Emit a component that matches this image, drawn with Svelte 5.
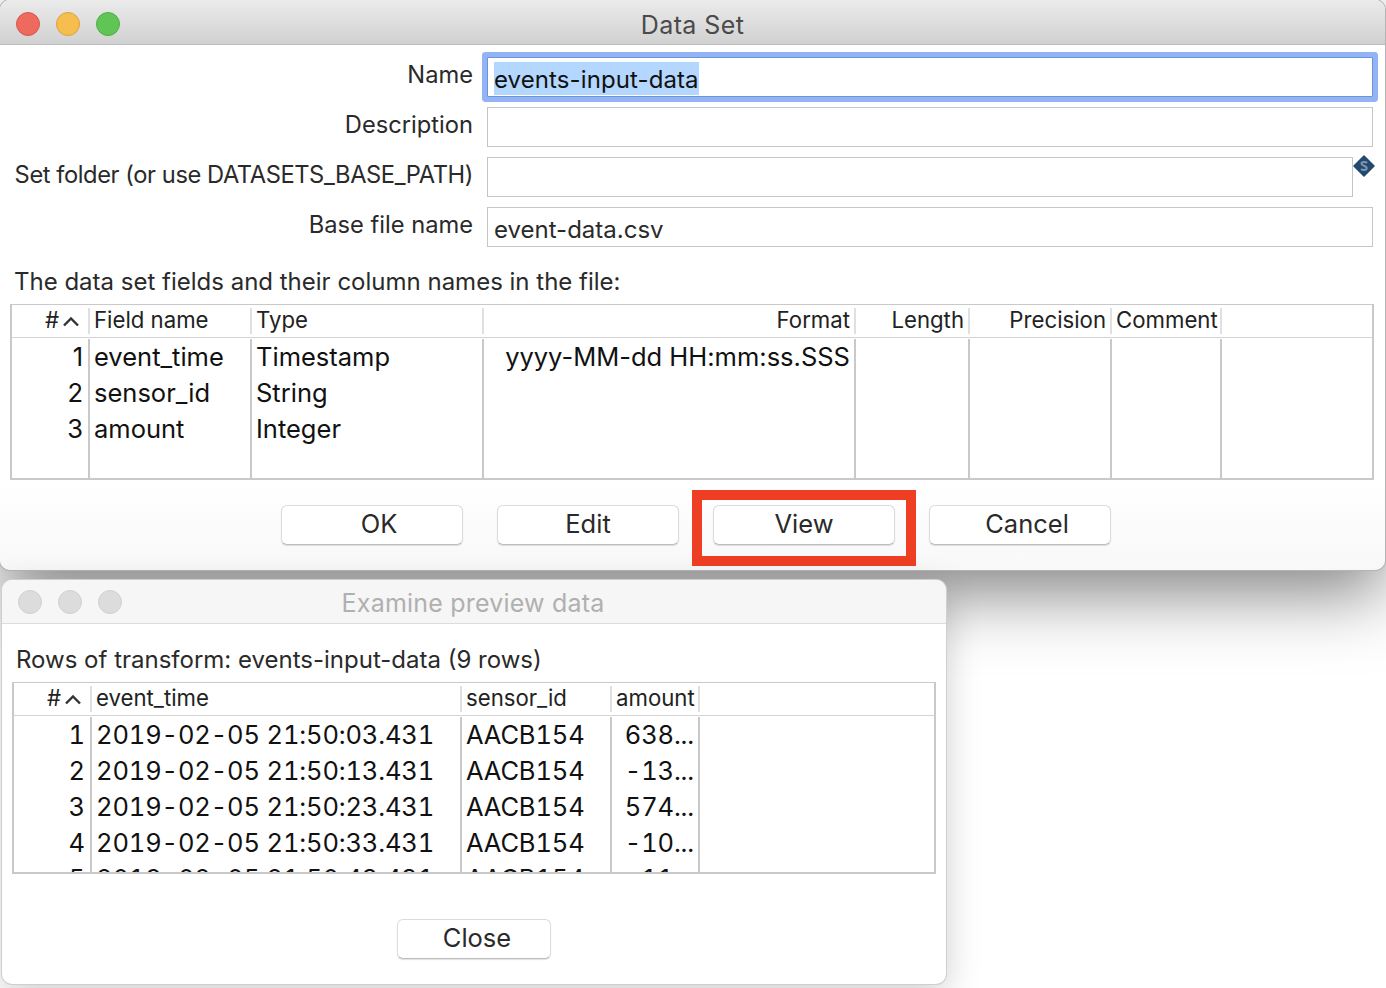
<script>
  const fields = [
    { n: 1, name: 'event_time', type: 'Timestamp', format: 'yyyy-MM-dd HH:mm:ss.SSS' },
    { n: 2, name: 'sensor_id', type: 'String', format: '' },
    { n: 3, name: 'amount', type: 'Integer', format: '' },
    { n: '', name: '', type: '', format: '' }
  ];

  const rows = [
    { n: 1, time: '2019-02-05 21:50:03.431', id: 'AACB154', amount: '638...' },
    { n: 2, time: '2019-02-05 21:50:13.431', id: 'AACB154', amount: '-13...' },
    { n: 3, time: '2019-02-05 21:50:23.431', id: 'AACB154', amount: '574...' },
    { n: 4, time: '2019-02-05 21:50:33.431', id: 'AACB154', amount: '-10...' },
    { n: 5, time: '2019-02-05 21:50:43.431', id: 'AACB154', amount: '-11...' }
  ];
</script>

<div class="desktop">
  <section class="window main">
    <header class="titlebar">
      <div class="lights">
        <span class="light red"></span>
        <span class="light yellow"></span>
        <span class="light green"></span>
      </div>
      <h1>Data Set</h1>
    </header>

    <div class="form">
      <label for="ds-name">Name</label>
      <div class="field focused">
        <div id="ds-name" class="input"><span class="selected">events-input-data</span></div>
      </div>

      <label for="ds-desc">Description</label>
      <div class="field"><div id="ds-desc" class="input"></div></div>

      <label class="long" for="ds-folder">Set folder (or use DATASETS_BASE_PATH)</label>
      <div class="field with-var">
        <div id="ds-folder" class="input"></div>
        <svg class="var-icon" width="22" height="22" viewBox="0 0 22 22">
          <path d="M11 1 21 11 11 21 1 11Z" fill="#24496f" stroke="#24496f" stroke-width="1.500" stroke-linejoin="round" />
          <path d="M14 8C13 6.800 8.500 6.500 8.500 8.800c0 2.200 5.200 1.800 5.200 4.400 0 2.300-4.400 2-5.600.8" fill="none" stroke="#7b95ae" stroke-width="2" />
        </svg>
      </div>

      <label for="ds-base">Base file name</label>
      <div class="field"><div id="ds-base" class="input">event-data.csv</div></div>
    </div>

    <p class="caption">The data set fields and their column names in the file:</p>

    <div class="table fields-table">
      <div class="thead row">
        <div class="cell num">#<svg class="sort" width="16" height="10" viewBox="0 0 16 10"><path d="M1 8.500 8 1.500 15 8.500" fill="none" stroke="#333" stroke-width="2.400" /></svg></div>
        <div class="cell">Field name</div>
        <div class="cell">Type</div>
        <div class="cell right">Format</div>
        <div class="cell right">Length</div>
        <div class="cell right">Precision</div>
        <div class="cell">Comment</div>
        <div class="cell last"></div>
      </div>
      <div class="tbody">
        {#each fields as f}
          <div class="row">
            <div class="cell num">{f.n}</div>
            <div class="cell">{f.name}</div>
            <div class="cell">{f.type}</div>
            <div class="cell right">{f.format}</div>
            <div class="cell"></div>
            <div class="cell"></div>
            <div class="cell"></div>
            <div class="cell last"></div>
          </div>
        {/each}
      </div>
    </div>

    <div class="actions">
      <button class="off">OK</button>
      <button>Edit</button>
      <span class="highlight"><button>View</button></span>
      <button class="off">Cancel</button>
    </div>
  </section>

  <section class="window preview">
    <header class="titlebar inactive">
      <div class="lights">
        <span class="light"></span>
        <span class="light"></span>
        <span class="light"></span>
      </div>
      <h1>Examine preview data</h1>
    </header>

    <p class="rows-title">Rows of transform: events-input-data (9 rows)</p>

    <div class="table rows-table">
      <div class="thead row">
        <div class="cell num">#<svg class="sort" width="16" height="10" viewBox="0 0 16 10"><path d="M1 8.500 8 1.500 15 8.500" fill="none" stroke="#333" stroke-width="2.400" /></svg></div>
        <div class="cell">event_time</div>
        <div class="cell">sensor_id</div>
        <div class="cell">amount</div>
        <div class="cell last"></div>
      </div>
      <div class="tbody">
        {#each rows as r}
          <div class="row">
            <div class="cell num">{r.n}</div>
            <div class="cell">{r.time}</div>
            <div class="cell">{r.id}</div>
            <div class="cell right">{r.amount}</div>
            <div class="cell last"></div>
          </div>
        {/each}
      </div>
    </div>

    <div class="close-row"><button class="close">Close</button></div>
  </section>
</div>

<style>
  :global(body) {
    margin: 0;
    background: #fff;
  }

  .desktop {
    position: relative;
    width: 1386px;
    height: 988px;
    overflow: hidden;
    font-family: Inter, "Liberation Sans", sans-serif;
    color: #2a2a2a;
  }

  /* the two windows sit on a free desktop */
  .window {
    position: absolute;
    box-sizing: border-box;
    background: #fff;
    border-radius: 10px;
  }

  .main {
    left: 0;
    top: 0;
    width: 1385px;
    height: 570px;
    background: linear-gradient(#fff 85%, #f8f8f8);
    box-shadow: 0 0 0 1px #b4b4b4, 0 22px 70px rgba(0, 0, 0, 0.5);
  }

  .preview {
    left: 2px;
    top: 580px;
    width: 944px;
    height: 404px;
    box-shadow: 0 0 0 1px #cfcfcf, 0 10px 36px rgba(0, 0, 0, 0.2);
  }

  .titlebar {
    display: flex;
    align-items: center;
    justify-content: center;
    position: relative;
    height: 45px;
    box-sizing: border-box;
    background: linear-gradient(#ebebeb, #d1d1d1);
    border-bottom: 1px solid #bcbcbc;
    border-radius: 10px 10px 0 0;
  }

  .titlebar h1 {
    margin: 0;
    padding-top: 5px;
    font-size: 25px;
    line-height: 32px;
    font-weight: 400;
    color: #4a4a4a;
    letter-spacing: 0.4px;
  }

  .titlebar.inactive {
    height: 44px;
    background: #f6f6f6;
    border-bottom: 1px solid #dcdcdc;
  }

  .titlebar.inactive h1 {
    color: #b0b0b0;
    padding-top: 3px;
    margin-left: -2px;
    letter-spacing: 0.2px;
  }

  .lights {
    position: absolute;
    left: 16px;
    top: 12px;
    display: flex;
    gap: 16px;
  }

  .inactive .lights {
    top: 10px;
  }

  .light {
    box-sizing: border-box;
    width: 24px;
    height: 24px;
    border-radius: 50%;
    background: #dcdcdc;
    border: 1px solid #d0d0d0;
  }

  .light.red { background: #ee6a5f; border-color: #d9574d; }
  .light.yellow { background: #f6bd4f; border-color: #dfa23b; }
  .light.green { background: #60c554; border-color: #4eae43; }

  .form {
    display: grid;
    grid-template-columns: 473px 886px;
    column-gap: 14px;
    row-gap: 10px;
    margin-top: 12px;
  }

  .form label {
    font-size: 23.7px;
    line-height: 36px;
    text-align: right;
    white-space: nowrap;
  }

  .form label.long {
    letter-spacing: -0.42px;
  }

  .field {
    position: relative;
    height: 40px;
    display: flex;
  }

  .input {
    flex: 1;
    box-sizing: border-box;
    height: 40px;
    border: 1px solid #c6c6c6;
    background: #fff;
    font-size: 24px;
    line-height: 44px;
    padding-left: 6px;
    white-space: nowrap;
  }

  .focused .input {
    border-color: #6d93d8;
    box-shadow: 0 0 0 5px #92b4f4;
    border-radius: 1px;
    color: #111;
  }

  .selected {
    display: inline-block;
    height: 33px;
    line-height: 36px;
    margin-top: 4px;
    vertical-align: top;
    background: #b3d7ff;
    letter-spacing: 0.1px;
  }

  .with-var {
    padding-right: 20px;
  }

  .var-icon {
    position: absolute;
    right: -2px;
    top: -2px;
  }

  .caption {
    margin: 19px 0 6px 14px;
    font-size: 24px;
    line-height: 32px;
  }

  .table {
    box-sizing: border-box;
    border: 2px solid #c9c9c9;
    border-top-width: 1px;
    overflow: hidden;
  }

  .fields-table {
    margin-left: 10px;
    width: 1364px;
    height: 176px;
  }

  .rows-table {
    margin-left: 10px;
    width: 924px;
    height: 192px;
  }

  .row {
    display: grid;
    height: 36px;
    font-size: 25.5px;
    line-height: 36px;
    color: #111;
  }

  .fields-table .row {
    grid-template-columns: 78px 162px 232px 372px 114px 142px 110px 1fr;
  }

  .rows-table .row {
    grid-template-columns: 78px 370px 150px 88px 1fr;
    font-variant-numeric: tabular-nums;
    letter-spacing: -0.15px;
  }

  .cell {
    box-sizing: border-box;
    border-right: 2px solid #c9c9c9;
    padding: 0 4px;
    white-space: nowrap;
  }

  .cell.last {
    border-right: 0;
  }

  .num {
    text-align: right;
    padding-right: 5px;
  }

  .right {
    text-align: right;
  }

  .thead.row {
    height: 32px;
    font-size: 22.2px;
    line-height: 31px;
    letter-spacing: 0;
    color: #222;
    border-bottom: 1px solid #d4d4d4;
    box-sizing: content-box;
  }

  .thead .cell {
    border-right-color: #e0e0e0;
    height: 26px;
    margin-top: 3px;
    line-height: 24px;
  }

  .thead .num {
    padding-right: 9px;
  }

  .sort {
    margin-left: 4px;
    vertical-align: 1px;
  }

  .tbody {
    overflow: hidden;
    padding-top: 1px;
    display: flex;
    flex-direction: column;
  }

  .tbody .row {
    flex: none;
  }

  .tbody .cell {
    height: 36px;
  }

  .fields-table .tbody {
    height: 140px;
  }

  .rows-table .tbody {
    height: 156px;
  }

  .actions {
    display: flex;
    align-items: flex-start;
    margin-top: 10px;
    padding-left: 281px;
    gap: 34px;
  }

  button {
    box-sizing: border-box;
    width: 182px;
    height: 40px;
    padding: 0 0 4px;
    background: #fff;
    border: 1px solid #dcdcdc;
    border-bottom-color: #bdbdbd;
    border-radius: 6px;
    box-shadow: 0 1px 1px rgba(0, 0, 0, 0.12);
    font-family: inherit;
    font-size: 25.5px;
    color: #2a2a2a;
  }

  .actions > button {
    margin-top: 15px;
  }

  /* labels on these buttons sit a little right of centre */
  button.off {
    padding-left: 14px;
  }

  .highlight {
    display: block;
    box-sizing: border-box;
    width: 224px;
    height: 76px;
    margin: 0 -21px;
    padding: 5px 11px;
    border: 10px solid #ee3f24;
  }

  .rows-title {
    margin: 20px 0 6px 14px;
    font-size: 24px;
    line-height: 32px;
  }

  .close-row {
    display: flex;
    justify-content: center;
    margin-top: 45px;
    padding-right: 1px;
  }

  .close {
    width: 154px;
    padding-left: 7px;
  }
</style>
